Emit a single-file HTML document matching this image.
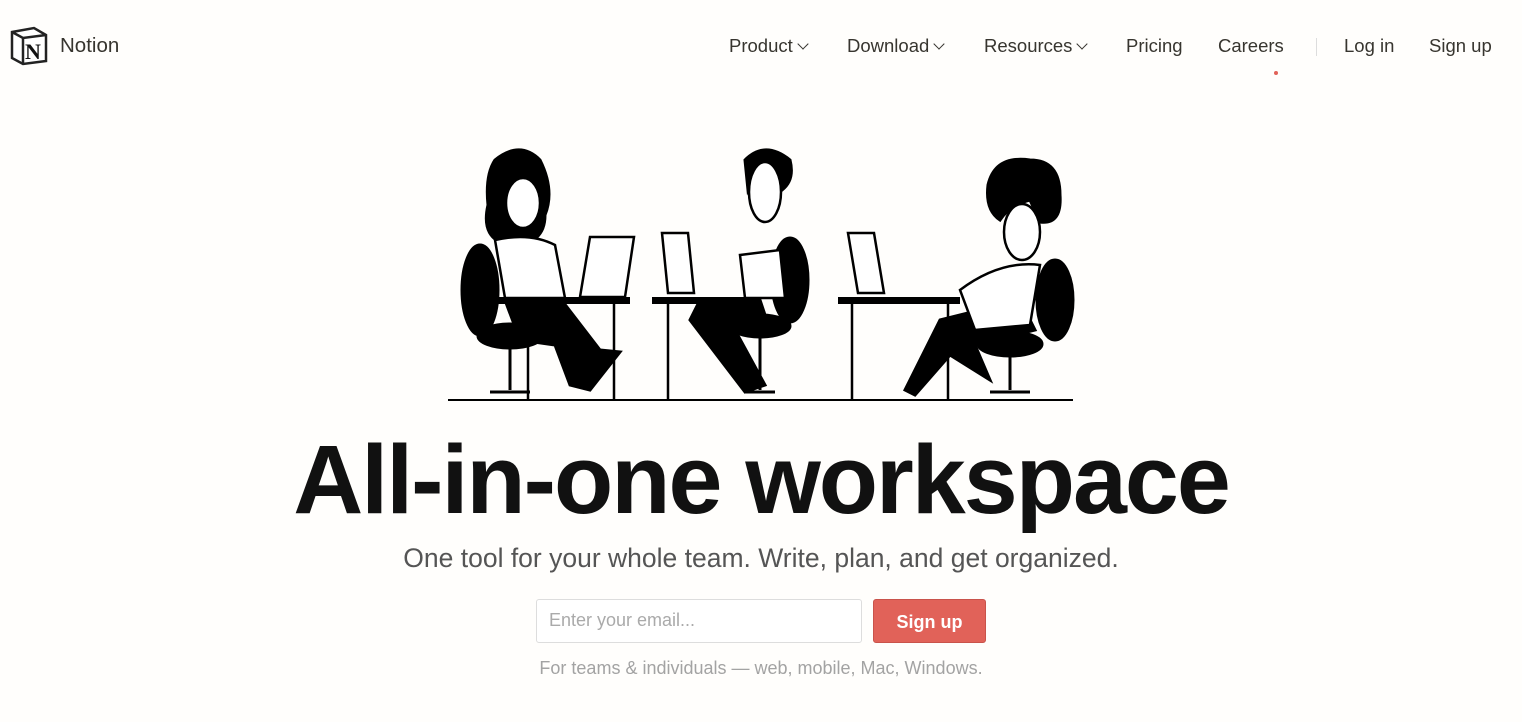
<!DOCTYPE html>
<html><head><meta charset="utf-8"><style>
body{margin:0;width:1522px;height:722px;background:#fffefc;font-family:"Liberation Sans",sans-serif;color:#37352f;position:relative;overflow:hidden}
.a{position:absolute;white-space:nowrap}
.nav{font-size:18.5px;top:35px}
.ch{display:inline-block;width:7px;height:7px;border-right:1.6px solid #37352f;border-bottom:1.6px solid #37352f;transform:rotate(45deg);margin-left:6px;position:relative;top:-4px}
h1{position:absolute;top:424px;left:0;width:1522px;text-align:center;margin:0;font-size:97px;font-weight:bold;letter-spacing:-2px;color:#111}
.sub{top:543px;left:0;width:1522px;text-align:center;font-size:26.5px;color:#555}
.in{left:536px;top:599px;width:326px;height:44px;border:1px solid #ddd;border-radius:3px;background:#fff;box-sizing:border-box;font-size:18px;color:#aaa;padding:10px 12px}
.btn{left:873px;top:599px;width:113px;height:44px;background:#e16259;border-radius:3px;color:#fff;font-size:18px;font-weight:bold;text-align:center;line-height:44px;border:1px solid #c9534b;box-sizing:border-box}
.fn{top:658px;left:0;width:1522px;text-align:center;font-size:18px;color:#a3a3a3}
</style></head><body>
<svg class="a" style="left:10px;top:26px" width="38" height="40" viewBox="0 0 38 40">
<path d="M2 6 L24 2 L36 9 L36 35 L13 38 L2 32 Z" fill="#fff" stroke="#222" stroke-width="2.5"/>
<path d="M2 6 L13 12 L36 9 M13 12 L13 38" fill="none" stroke="#222" stroke-width="2.5"/>
<text x="15" y="33" font-family="Liberation Serif" font-weight="bold" font-size="22" fill="#111">N</text>
</svg>
<div class="a" style="left:60px;top:34px;font-size:20.5px">Notion</div>
<div class="a nav" style="left:729px">Product<span class="ch"></span></div>
<div class="a nav" style="left:847px">Download<span class="ch"></span></div>
<div class="a nav" style="left:984px">Resources<span class="ch"></span></div>
<div class="a nav" style="left:1126px">Pricing</div>
<div class="a nav" style="left:1218px">Careers</div>
<div class="a" style="left:1274px;top:71px;width:4px;height:4px;border-radius:2px;background:#e16259"></div>
<div class="a" style="left:1316px;top:38px;width:1px;height:18px;background:#ddd"></div>
<div class="a nav" style="left:1344px">Log in</div>
<div class="a nav" style="left:1429px">Sign up</div>

<svg class="a" style="left:0;top:0" width="1522" height="420">
<g fill="#000" stroke="#000" stroke-width="3">
<rect x="448" y="399" width="625" height="2" stroke="none"/>
<rect x="490" y="297" width="140" height="7" stroke="none"/>
<rect x="652" y="297" width="96" height="7" stroke="none"/>
<rect x="838" y="297" width="122" height="7" stroke="none"/>
<path d="M528 304V400M614 304V400M668 304V400M852 304V400M948 304V400" fill="none" stroke-width="2.5"/>
<ellipse cx="480" cy="290" rx="18" ry="45"/><ellipse cx="510" cy="336" rx="32" ry="12"/>
<ellipse cx="790" cy="280" rx="18" ry="42"/><ellipse cx="760" cy="326" rx="30" ry="11"/>
<ellipse cx="1055" cy="300" rx="18" ry="40"/><ellipse cx="1010" cy="344" rx="32" ry="12"/>
<path d="M510 345V390M760 335V390M1010 355V390" fill="none" stroke-width="3"/>
<path d="M490 392h40M745 392h30M990 392h40" fill="none"/>
<path d="M495 160 Q520 140 540 160 Q555 190 545 215 Q545 245 510 245 Q480 240 488 205 Q485 175 495 160Z"/>
<path d="M745 160 Q765 140 790 160 Q795 180 782 190 L770 172 Q755 175 748 190Z"/>
<path d="M988 185 Q995 155 1030 160 Q1060 160 1060 195 Q1062 225 1040 222 L1030 200 Q1010 205 1000 220 Q985 210 988 185Z"/>
<path d="M505 300 L560 298 L600 350 L620 352 L590 390 L570 385 L555 345 L520 340Z"/>
<path d="M700 300 L760 300 L770 330 L735 330 L765 385 L745 392 L690 320Z"/>
<path d="M940 320 L1020 300 L1035 330 L975 345 L990 380 L950 355 L915 395 L905 390Z"/>
</g>
<g fill="#fff" stroke="#000" stroke-width="2.5">
<ellipse cx="523" cy="203" rx="17" ry="25"/>
<ellipse cx="765" cy="192" rx="16" ry="30"/>
<ellipse cx="1022" cy="232" rx="18" ry="28"/>
<path d="M495 240 Q530 232 555 245 L565 298 L505 298 Z"/>
<path d="M740 255 L780 250 L785 298 L745 298Z"/>
<path d="M960 290 Q1000 260 1040 265 L1030 325 L975 330Z"/>
<path d="M590 237 L634 237 L625 297 L580 297Z"/>
<path d="M662 233 L688 233 L694 293 L668 293Z"/>
<path d="M848 233 L874 233 L884 293 L858 293Z"/>
</g>
</svg>

<h1>All-in-one workspace</h1>
<div class="a sub">One tool for your whole team. Write, plan, and get organized.</div>
<div class="a in">Enter your email...</div>
<div class="a btn">Sign up</div>
<div class="a fn">For teams &amp; individuals — web, mobile, Mac, Windows.</div>
</body></html>
